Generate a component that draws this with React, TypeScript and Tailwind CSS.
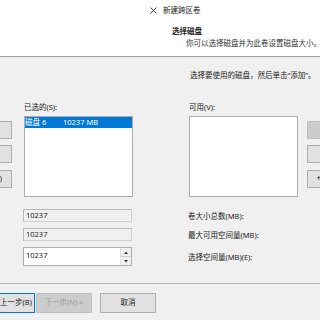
import { ReactNode } from 'react'

const font = { fontFamily: '"Noto Sans", "Noto Sans CJK SC", sans-serif' }

function SideButton({ children, disabled, align }: { children?: ReactNode; disabled?: boolean; align: 'left' | 'right' }) {
  return (
    <div
      className={`h-[18px] w-[72px] flex items-center border text-[7.5px] leading-none whitespace-nowrap ${
        disabled ? 'bg-[#cccccc] border-[#bfbfbf] text-[#9a9a9a]' : 'bg-[#e1e1e1] border-[#adadad] text-[#1a1a1a]'
      } ${align === 'right' ? 'justify-end pr-[9px]' : 'justify-start pl-[9px]'}`}
    >
      {children}
    </div>
  )
}

function ReadonlyField({ value }: { value: string }) {
  return (
    <div className="ml-[23px] w-[109px] shrink-0 h-[13px] flex items-center pl-[2px] border border-[#cfcfcf] border-t-[#b9b9b9] border-l-[#b9b9b9] bg-[#f0f0f0] text-[7.5px] text-[#222]">
      {value}
    </div>
  )
}

export default function App() {
  return (
    <div className="w-[320px] h-[320px] overflow-hidden bg-[#f0f0f0] text-[#1a1a1a]" style={font}>
      {/* 头部 */}
      <div className="h-[57px] bg-white border-b border-[#a0a0a0]">
        <div className="pt-[4px] pl-[150px] flex items-center h-[16px] gap-[6px]">
          <svg width="7" height="7" viewBox="0 0 7 7" className="shrink-0">
            <path d="M0.5 0.5L6.5 6.5M6.5 0.5L0.5 6.5" stroke="#333" strokeWidth="0.9" />
          </svg>
          <span className="text-[7.5px] leading-[12px]">新建跨区卷</span>
        </div>
        <div className="mt-[9px] pl-[172px] text-[7.5px] leading-[12px] font-bold">选择磁盘</div>
        <div className="pl-[186px] text-[7.5px] leading-[12px] text-[#333] whitespace-nowrap">
          你可以选择磁盘并为此卷设置磁盘大小。
        </div>
      </div>

      {/* 说明 */}
      <div className="pt-[12px] pl-[190px] text-[7.5px] leading-[12px] whitespace-nowrap">
        选择要使用的磁盘，然后单击“添加”。
      </div>

      {/* 列表标签 */}
      <div className="mt-[20px] flex text-[7.5px] leading-[12px]">
        <div className="ml-[24px] w-[165px] shrink-0">已选的(S):</div>
        <div>可用(V):</div>
      </div>

      {/* 列表区域 */}
      <div className="mt-[3px] flex">
        <div className="ml-[-60px] w-[72px] shrink-0 pt-[5px] flex flex-col gap-[6px]">
          <SideButton align="right">{' '}</SideButton>
          <SideButton align="right">{' '}</SideButton>
          <div className="mt-[1px]">
            <SideButton align="right">全部删除(D)</SideButton>
          </div>
        </div>
        <div className="ml-[12px] w-[109px] shrink-0 h-[81px] border border-[#abadb3] bg-white">
          <div className="h-[11px] bg-[#0078d7] text-white text-[7.5px] leading-[11px] flex whitespace-nowrap">
            <span className="w-[38px]">磁盘 6</span>
            <span>10237 MB</span>
          </div>
        </div>
        <div className="ml-[56px] w-[109px] shrink-0 h-[81px] border border-[#abadb3] bg-white" />
        <div className="ml-[9px] shrink-0 pt-[5px] flex flex-col gap-[6px]">
          <SideButton align="left" disabled>{' '}</SideButton>
          <SideButton align="left">{' '}</SideButton>
          <div className="mt-[1px]">
            <SideButton align="left">←删除(R)</SideButton>
          </div>
        </div>
      </div>

      {/* 大小字段 */}
      <div className="mt-[12px] flex items-center">
        <ReadonlyField value="10237" />
        <div className="ml-[56px] text-[7.5px] leading-[12px] whitespace-nowrap">卷大小总数(MB):</div>
      </div>
      <div className="mt-[6px] flex items-center">
        <ReadonlyField value="10237" />
        <div className="ml-[56px] text-[7.5px] leading-[12px] whitespace-nowrap">最大可用空间量(MB):</div>
      </div>
      <div className="mt-[6px] flex items-center">
        <div className="ml-[23px] w-[109px] shrink-0 h-[19px] flex border border-[#abadb3] bg-white">
          <div className="flex-1 pl-[2px] pt-[2px] text-[7.5px] leading-[10px]">10237</div>
          <div className="w-[11px] flex flex-col border-l border-[#e0e0e0]">
            <div className="flex-1 flex items-center justify-center bg-[#f0f0f0] border-b border-[#d0d0d0]">
              <svg width="4" height="3" viewBox="0 0 4 3">
                <path d="M0 3L2 0.5L4 3Z" fill="#333" />
              </svg>
            </div>
            <div className="flex-1 flex items-center justify-center bg-[#f0f0f0]">
              <svg width="4" height="3" viewBox="0 0 4 3">
                <path d="M0 0L2 2.5L4 0Z" fill="#333" />
              </svg>
            </div>
          </div>
        </div>
        <div className="ml-[56px] text-[7.5px] leading-[12px] whitespace-nowrap">选择空间量(MB)(E):</div>
      </div>

      {/* 底部按钮 */}
      <div className="mt-[17px] border-t border-[#b4b4b4]" />
      <div className="mt-[9px] flex">
        <div className="ml-[-21px] w-[56px] shrink-0 h-[20px] flex items-center justify-end pr-[2px] border border-[#0078d7] bg-[#e1e1e1] text-[7.5px] whitespace-nowrap">
          &lt; 上一步(B)
        </div>
        <div className="ml-[1px] w-[56px] shrink-0 h-[20px] flex items-center justify-center border border-[#bfbfbf] bg-[#cccccc] text-[7.5px] text-[#9a9a9a] whitespace-nowrap">
          下一步(N) &gt;
        </div>
        <div className="ml-[8px] w-[56px] shrink-0 h-[20px] flex items-center justify-center border border-[#adadad] bg-[#e1e1e1] text-[7.5px]">
          取消
        </div>
      </div>
    </div>
  )
}
